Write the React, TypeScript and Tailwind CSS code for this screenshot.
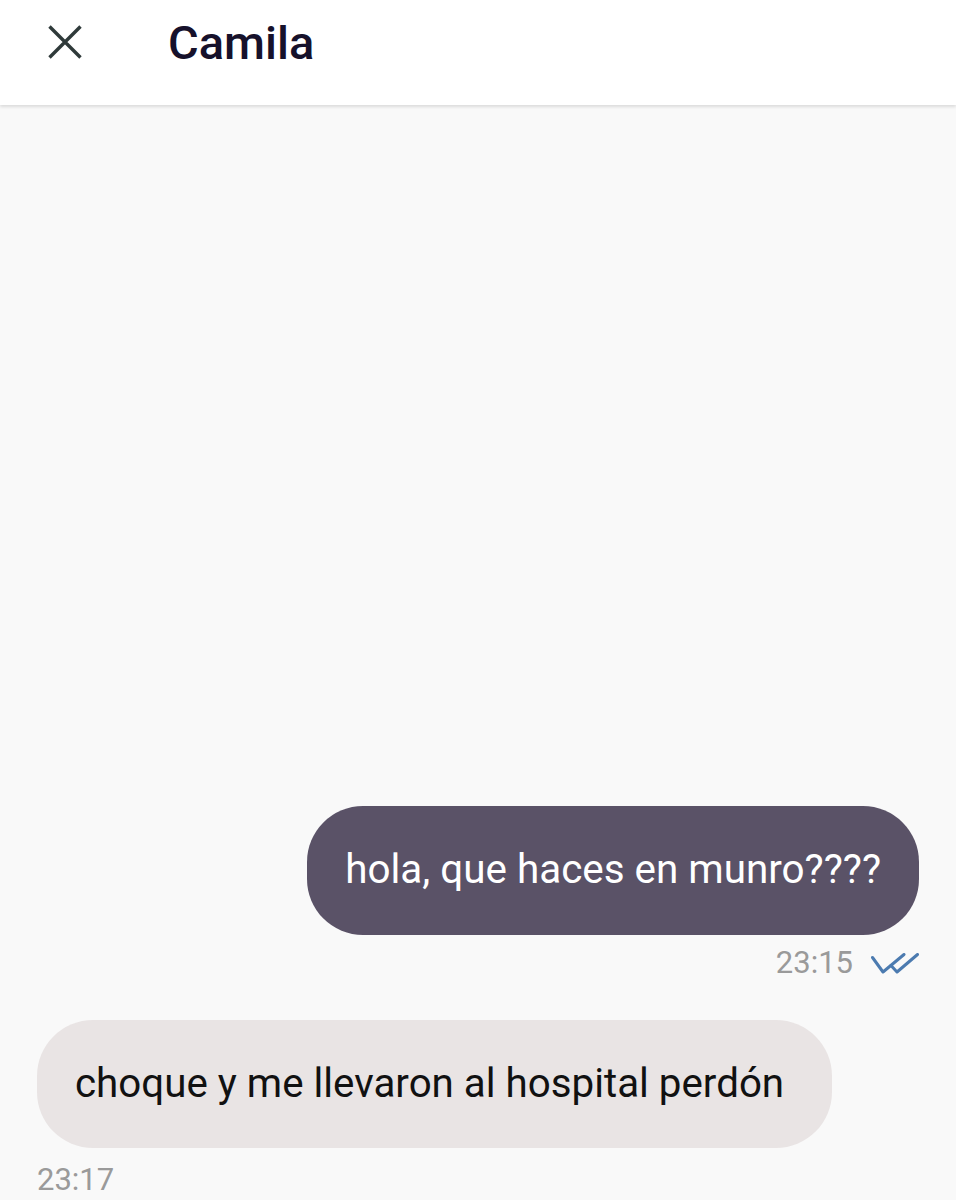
export default function App() {
  return (
    <div className="h-[1200px] w-[956px] overflow-hidden flex flex-col bg-[#f9f9f9]" style={{ fontFamily: 'Roboto, "Noto Sans", sans-serif' }}>
      {/* Header */}
      <header className="h-[105px] flex-shrink-0 bg-white shadow-[0_2px_3px_rgba(0,0,0,0.12)] z-10">
        <div className="h-[84px] flex items-center">
          <div className="w-[168px] pl-[48px] flex items-center">
            <svg width="34" height="34" viewBox="0 0 34 34" fill="none" stroke="#2f3a3a" strokeWidth="3.4">
              <path d="M1.5 1.5l31 31M32.5 1.5l-31 31" />
            </svg>
          </div>
          <span className="text-[47px] font-medium text-[#16112b] leading-none">Camila</span>
        </div>
      </header>

      {/* Messages */}
      <main className="flex-1 flex flex-col justify-end px-[37px] pb-[5px]">
        <div className="flex flex-col items-end">
          <div className="h-[129px] flex items-center rounded-[56px] bg-[#5a5267] px-[38px]">
            <span className="text-[40.4px] text-white">hola, que haces en munro????</span>
          </div>
          <div className="flex items-center gap-[18px] mt-[12px] h-[32px]">
            <span className="text-[31px] text-[#9a9a9a]">23:15</span>
            <svg width="48" height="21" viewBox="0 0 48 21" fill="none" stroke="#4c7bb0" strokeWidth="3" strokeLinecap="round" strokeLinejoin="round">
              <path d="M1.5 4.5L12 19L33 1.5" />
              <path d="M20 12.5L26 19L46.5 1.5" />
            </svg>
          </div>
        </div>

        <div className="flex flex-col items-start mt-[41px]">
          <div className="h-[128px] flex items-center rounded-[56px] bg-[#e9e4e4] pl-[38px] pr-[48px]">
            <span className="text-[40.3px] text-[#111]">choque y me llevaron al hospital perdón</span>
          </div>
          <span className="text-[31px] text-[#9a9a9a] mt-[16px] leading-none">23:17</span>
        </div>
      </main>
    </div>
  )
}
